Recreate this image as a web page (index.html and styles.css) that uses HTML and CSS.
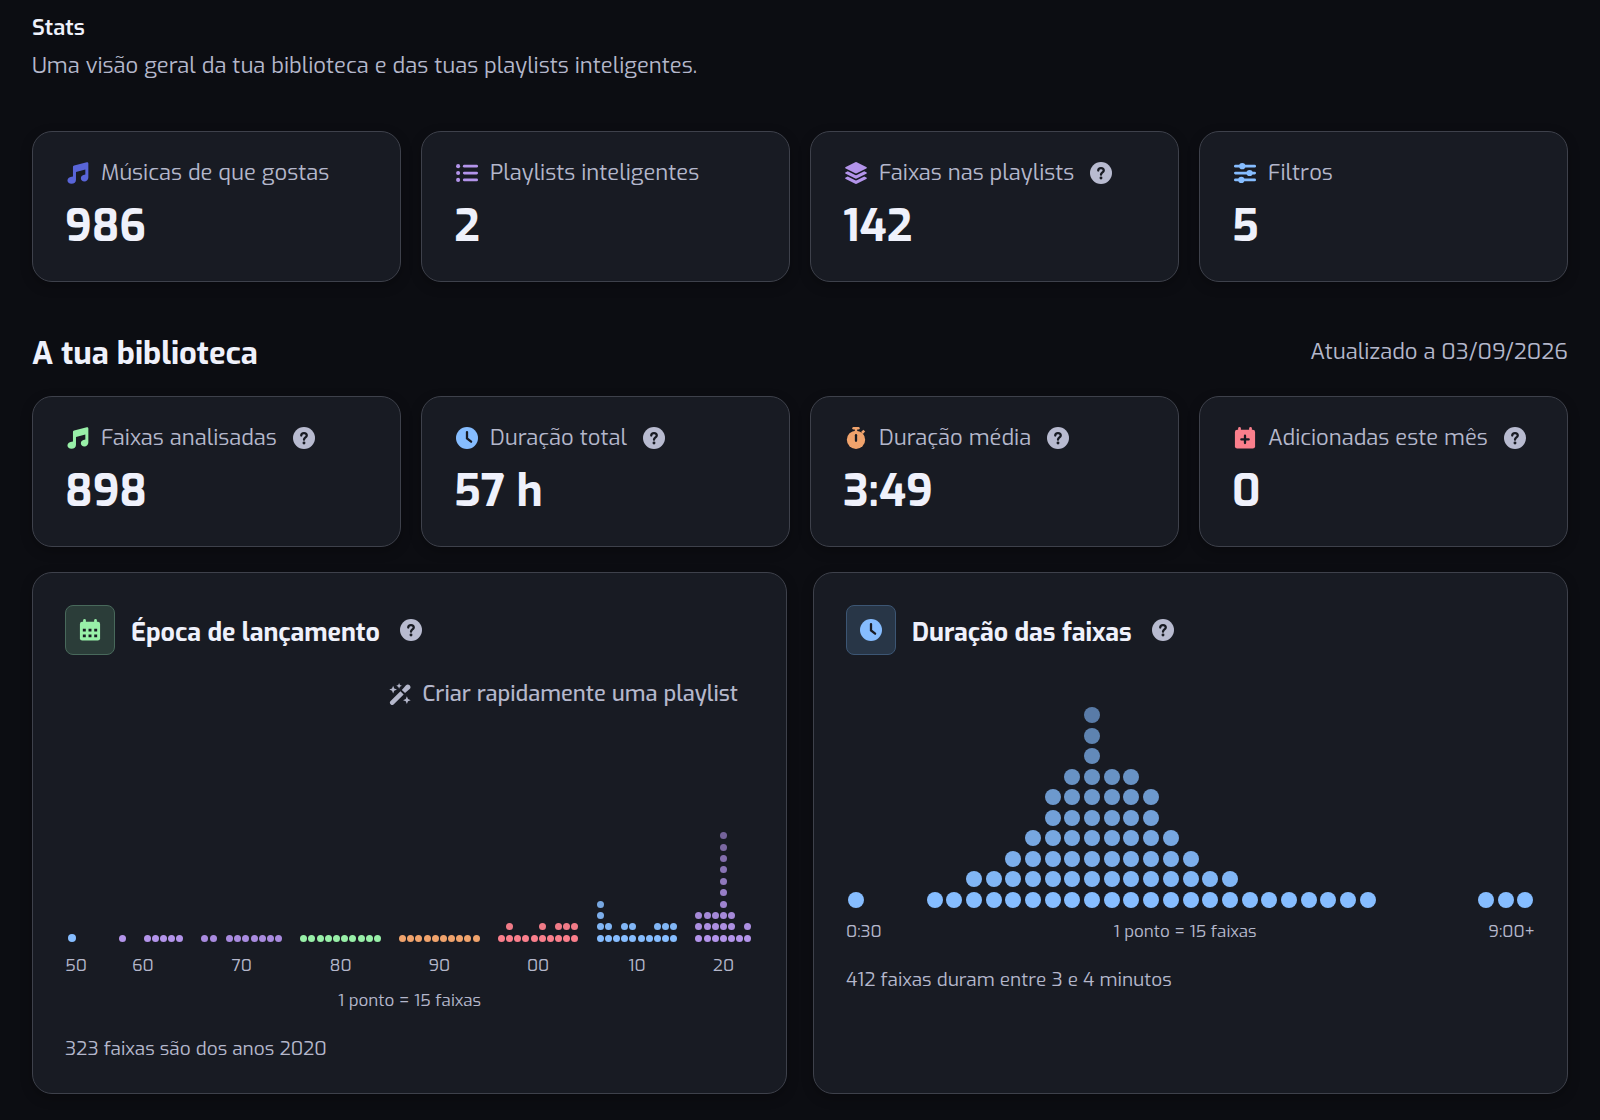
FILE: index.html
```html
<!DOCTYPE html>
<html lang="pt">
<head>
    <meta charset="UTF-8">
    <meta name="viewport" content="width=device-width, initial-scale=1.0">
    <title>Stats</title>
    <link rel="stylesheet" href="styles.css">
</head>
<body>

    <!-- Shared icons -->
    <svg class="sprite" aria-hidden="true">
        <symbol id="i-music" viewBox="0 0 24 24">
            <path d="M6.500 5.600c0-.9.500-1.500 1.300-1.700L21.600.2c.9-.2 1.700.3 1.700 1.300v15.400c0 2.600-1.900 4.300-4.300 4.300-2.300 0-3.900-1.500-3.900-3.500 0-2.300 1.800-3.700 4.900-4.100V8.200L9.800 10.900v8.400c0 2.600-2 4.500-4.900 4.500-2.600 0-4.400-1.500-4.400-3.600 0-2.400 2-3.800 6-4.300z"/>
        </symbol>
        <symbol id="i-list" viewBox="0 0 24 24">
            <circle cx="2.300" cy="4.500" r="2.200"/><circle cx="2.300" cy="12" r="2.200"/><circle cx="2.300" cy="19.500" r="2.200"/>
            <rect x="7.500" y="3" width="16.500" height="3" rx="1.500"/>
            <rect x="7.500" y="10.500" width="16.500" height="3" rx="1.500"/>
            <rect x="7.500" y="18" width="16.500" height="3" rx="1.500"/>
        </symbol>
        <symbol id="i-layers" viewBox="0 0 24 24">
            <path d="M11.200.3a2 2 0 0 1 1.600 0l10.400 5.200c.8.400.8 1.200 0 1.600l-10.400 5.200a2 2 0 0 1-1.600 0L.8 7.100c-.8-.4-.8-1.200 0-1.600z"/>
            <path d="M.8 11.200 3 10.100l8.200 4.100a2 2 0 0 0 1.600 0l8.200-4.100 2.200 1.100c.8.400.8 1.200 0 1.600L12.800 18a2 2 0 0 1-1.600 0L.8 12.800c-.8-.4-.8-1.200 0-1.600z"/>
            <path d="M.8 16.900 3 15.800l8.200 4.100a2 2 0 0 0 1.600 0l8.200-4.100 2.200 1.100c.8.400.8 1.200 0 1.600l-10.400 5.200a2 2 0 0 1-1.600 0L.8 18.500c-.8-.4-.8-1.200 0-1.600z"/>
        </symbol>
        <symbol id="i-sliders" viewBox="0 0 24 24">
            <rect x="0" y="3" width="24" height="3" rx="1.500"/><circle cx="9" cy="4.500" r="3.400"/>
            <rect x="0" y="10.500" width="24" height="3" rx="1.500"/><circle cx="17" cy="12" r="3.400"/>
            <rect x="0" y="18" width="24" height="3" rx="1.500"/><circle cx="8" cy="19.500" r="3.400"/>
        </symbol>
        <symbol id="i-clock" viewBox="0 0 24 24">
            <circle cx="12" cy="12" r="12"/>
            <path class="cut" d="M12 5.500v7l4.500 3.500"/>
        </symbol>
        <symbol id="i-timer" viewBox="0 0 24 24">
            <rect x="8" y="0" width="8" height="2.600" rx="1.300"/>
            <rect x="10.700" y="1" width="2.600" height="5"/>
            <path d="m17.500 5.500 2.500-2.500 2 2-2.500 2.500z"/>
            <circle cx="12" cy="14" r="10"/>
            <path class="cut" d="M12 9v6"/>
        </symbol>
        <symbol id="i-calendar-plus" viewBox="0 0 24 24">
            <rect x="1" y="3" width="22" height="20.500" rx="2.500"/>
            <rect x="4.500" y="0" width="3" height="5" rx="1.500"/><rect x="16.500" y="0" width="3" height="5" rx="1.500"/>
            <path class="cut" d="M12 9.500v8M8 13.500h8"/>
        </symbol>
        <symbol id="i-calendar" viewBox="0 0 24 24">
            <rect x="1" y="3" width="22" height="20.500" rx="2.500"/>
            <rect x="4.500" y="0" width="3" height="5" rx="1.500"/><rect x="16.500" y="0" width="3" height="5" rx="1.500"/>
            <path class="cut cut-grid" d="M4.200 12.200h3.200M10.400 12.200h3.200M16.600 12.200h3.200M4.200 18.500h3.200M10.400 18.500h3.200M16.600 18.500h3.200"/>
        </symbol>
        <symbol id="i-wand" viewBox="0 0 24 24">
            <path d="m1.500 20 11-11 3.500 3.500L5 23.500a2.500 2.500 0 0 1-3.500-3.500zM14 7.500l4.500-5a2.800 2.800 0 0 1 4 4l-5 4.500z"/>
            <path d="m4.500 3 1.200 3 3 1.200-3 1.200-1.200 3-1.200-3-3-1.200 3-1.200zM11 0l.9 2.200 2.200.9-2.200.9L11 6.200 10.100 4l-2.200-.9 2.200-.9zM19.500 14.500l1.200 3 3 1.200-3 1.200-1.200 3-1.200-3-3-1.200 3-1.200z"/>
        </symbol>
        <symbol id="i-help" viewBox="0 0 24 24">
            <circle cx="12" cy="12" r="12"/>
            <path class="cut" d="M9 9.300c0-3.600 6-3.600 6 0 0 2-3 2.200-3 4.500"/>
            <circle class="cut-dot" cx="12" cy="17.500" r="1.600"/>
        </symbol>
    </svg>

    <header class="page-header">
        <h1>Stats</h1>
        <p>Uma visão geral da tua biblioteca e das tuas playlists inteligentes.</p>
    </header>

    <section class="card-grid">
        <div class="card">
            <div class="card-label"><svg class="icon indigo"><use href="#i-music"/></svg>Músicas de que gostas</div>
            <div class="card-value">986</div>
        </div>
        <div class="card">
            <div class="card-label"><svg class="icon purple"><use href="#i-list"/></svg>Playlists inteligentes</div>
            <div class="card-value">2</div>
        </div>
        <div class="card">
            <div class="card-label"><svg class="icon purple"><use href="#i-layers"/></svg>Faixas nas playlists
                <button class="help" aria-label="Ajuda"><svg class="icon"><use href="#i-help"/></svg></button></div>
            <div class="card-value">142</div>
        </div>
        <div class="card">
            <div class="card-label"><svg class="icon blue"><use href="#i-sliders"/></svg>Filtros</div>
            <div class="card-value">5</div>
        </div>
    </section>

    <div class="section-header">
        <h2>A tua biblioteca</h2>
        <span>Atualizado a 03/09/2026</span>
    </div>

    <section class="card-grid">
        <div class="card">
            <div class="card-label"><svg class="icon green"><use href="#i-music"/></svg>Faixas analisadas
                <button class="help" aria-label="Ajuda"><svg class="icon"><use href="#i-help"/></svg></button></div>
            <div class="card-value">898</div>
        </div>
        <div class="card">
            <div class="card-label"><svg class="icon blue"><use href="#i-clock"/></svg>Duração total
                <button class="help" aria-label="Ajuda"><svg class="icon"><use href="#i-help"/></svg></button></div>
            <div class="card-value">57 h</div>
        </div>
        <div class="card">
            <div class="card-label"><svg class="icon orange"><use href="#i-timer"/></svg>Duração média
                <button class="help" aria-label="Ajuda"><svg class="icon"><use href="#i-help"/></svg></button></div>
            <div class="card-value">3:49</div>
        </div>
        <div class="card">
            <div class="card-label"><svg class="icon red"><use href="#i-calendar-plus"/></svg>Adicionadas este mês
                <button class="help" aria-label="Ajuda"><svg class="icon"><use href="#i-help"/></svg></button></div>
            <div class="card-value">0</div>
        </div>
    </section>

    <section class="panel-grid">
        <div class="panel">
            <div class="panel-title">
                <span class="badge badge-green"><svg class="icon"><use href="#i-calendar"/></svg></span>
                <h3>Época de lançamento</h3>
                <button class="help" aria-label="Ajuda"><svg class="icon"><use href="#i-help"/></svg></button>
            </div>
            <div class="panel-actions">
                <button class="quick-button"><svg class="icon"><use href="#i-wand"/></svg>Criar rapidamente uma playlist</button>
            </div>
            <div class="year-chart" id="yearChart"></div>
            <p class="scale">1 ponto = 15 faixas</p>
            <p class="note">323 faixas são dos anos 2020</p>
        </div>

        <div class="panel">
            <div class="panel-title">
                <span class="badge badge-blue"><svg class="icon"><use href="#i-clock"/></svg></span>
                <h3>Duração das faixas</h3>
                <button class="help" aria-label="Ajuda"><svg class="icon"><use href="#i-help"/></svg></button>
            </div>
            <div class="dots duration-chart" id="durationChart"></div>
            <div class="axis">
                <span>0:30</span>
                <span>1 ponto = 15 faixas</span>
                <span>9:00+</span>
            </div>
            <p class="note">412 faixas duram entre 3 e 4 minutos</p>
        </div>
    </section>

    <script src="stats.js"></script>

</body>
</html>
```
FILE: styles.css
```css
:root {
    --bg: #0c0d12;
    --card: #181b23;
    --border: #3e414b;
    --text: #eff1fb;
    --muted: #b4b7cb;
    --help: #b8bbd0;
    --indigo: #5965d8;
    --purple: #b394ea;
    --violet: #a98bdf;
    --blue: #86bdff;
    --green: #98f0a8;
    --orange: #f0a36c;
    --red: #fa7f8c;
}

* {
    box-sizing: border-box;
}

body {
    font-family: Exo, 'Exo 2', Roboto, sans-serif;
    background: var(--bg);
    color: var(--text);
    margin: 0;
    padding: 12px 32px 24px;
}

h1, h2, h3, p {
    margin: 0;
}

.sprite {
    display: none;
}

.icon {
    width: 26px;
    height: 26px;
    padding: 2px;
    flex: none;
    fill: currentColor;
}

.cut {
    fill: none;
    stroke: var(--card);
    stroke-width: 2.5;
    stroke-linecap: round;
}

.cut-grid {
    stroke-width: 3;
    stroke-linecap: butt;
}

.cut-dot {
    fill: var(--card);
}

.indigo { color: var(--indigo); }
.purple { color: var(--purple); }
.violet { color: var(--violet); }
.blue { color: var(--blue); }
.green { color: var(--green); }
.orange { color: var(--orange); }
.red { color: var(--red); }

/* Header */
.page-header {
    margin-bottom: 49px;
}

.page-header h1 {
    font-size: 22px;
    font-weight: 600;
    line-height: 32px;
}

.page-header p {
    margin-top: 6px;
    font-size: 22px;
    line-height: 32px;
    color: var(--muted);
}

/* Cards */
.card-grid {
    display: grid;
    grid-template-columns: repeat(4, minmax(0, 1fr));
    gap: 20px;
}

.card, .panel {
    background: var(--card);
    border: 1px solid var(--border);
    border-radius: 20px;
    box-shadow: 0 4px 12px rgba(0, 0, 0, 0.25);
}

.card {
    padding: 25px 32px 27px;
}

.card-label {
    display: flex;
    align-items: center;
    gap: 10px;
    font-size: 22px;
    line-height: 32px;
    color: var(--muted);
    white-space: nowrap;
}

.card-value {
    margin-top: 9px;
    font-size: 44px;
    font-weight: 700;
    line-height: 56px;
}

.help {
    display: flex;
    margin: 0 0 0 4px;
    padding: 0;
    border: none;
    background: none;
    color: var(--help);
    cursor: pointer;
}

.section-header {
    display: flex;
    justify-content: space-between;
    align-items: flex-start;
    margin: 50px 0 21px;
}

.section-header h2 {
    font-size: 31px;
    font-weight: 700;
    line-height: 43px;
}

.section-header span {
    font-size: 22px;
    line-height: 40px;
    color: var(--muted);
}

/* Panels */
.panel-grid {
    display: grid;
    grid-template-columns: repeat(2, minmax(0, 1fr));
    gap: 26px;
    margin-top: 25px;
}

.panel {
    padding: 32px 32px 30px;
}

.panel-title {
    display: flex;
    align-items: center;
    gap: 16px;
}

.panel-title h3 {
    padding-top: 4px;
    font-size: 25px;
    font-weight: 700;
}

.panel-title .help {
    margin-left: 2px;
}

.badge {
    display: flex;
    align-items: center;
    justify-content: center;
    width: 50px;
    height: 50px;
    border: 1px solid;
    border-radius: 8px;
}

.badge-green {
    color: var(--green);
    background: #2b3d39;
    border-color: #48695b;
}

.badge-green .cut {
    stroke: #2b3d39;
}

.badge-blue {
    color: var(--blue);
    background: #283647;
    border-color: #3c5674;
}

.panel-actions {
    display: flex;
    justify-content: flex-end;
    margin-top: 23px;
}

.quick-button {
    display: flex;
    align-items: center;
    gap: 10px;
    padding: 0 16px;
    border: none;
    background: none;
    color: var(--muted);
    font-family: inherit;
    font-size: 22px;
    font-weight: 500;
    line-height: 32px;
    cursor: pointer;
}

/* Dot charts */
.dots {
    display: flex;
}

.column {
    flex: 1;
    display: flex;
    flex-direction: column-reverse;
}

.cell {
    height: 10%;
    display: flex;
    align-items: center;
    justify-content: center;
}

.dot {
    width: 7px;
    height: 7px;
    border-radius: 50%;
    background: currentColor;
}

.year-chart {
    display: flex;
    gap: 17px;
    margin-top: 120px;
    padding-right: 2px;
}

.decade {
    min-width: 0;
}

.decade .dots {
    height: 114px;
}

/* the lone year sits under the start of its label */
.decade:first-child .dots {
    width: 14px;
}

.decade:first-child .dot {
    width: 8px;
    height: 8px;
}

.decade-label {
    margin-top: 10px;
    font-size: 17px;
    line-height: 24px;
    text-align: center;
    color: var(--muted);
}

.duration-chart {
    height: 205px;
    margin-top: 50px;
    color: var(--blue);
}

.duration-chart .dot {
    width: 16px;
    height: 16px;
}

.axis {
    display: flex;
    justify-content: space-between;
    margin-top: 10px;
}

.axis, .scale {
    font-size: 17px;
    line-height: 24px;
    color: var(--muted);
}

.scale {
    margin-top: 11px;
    text-align: center;
}

.note {
    margin-top: 22px;
    font-size: 19px;
    line-height: 28px;
    color: var(--muted);
}
```
FILE: stats.js
```js
const ROWS = 10;

// One entry per decade, one number per year (1 dot = 15 tracks)
const decades = [
    { label: "50", color: "blue", years: [1] },
    { label: "60", color: "purple", years: [0, 0, 1, 0, 0, 1, 1, 1, 1, 1] },
    { label: "70", color: "violet", years: [1, 1, 0, 1, 1, 1, 1, 1, 1, 1] },
    { label: "80", color: "green", years: [1, 1, 1, 1, 1, 1, 1, 1, 1, 1] },
    { label: "90", color: "orange", years: [1, 1, 1, 1, 1, 1, 1, 1, 1, 1] },
    { label: "00", color: "red", years: [1, 2, 1, 1, 1, 2, 1, 2, 2, 2] },
    { label: "10", color: "blue", years: [4, 2, 1, 2, 2, 1, 1, 2, 2, 2] },
    { label: "20", color: "purple", years: [3, 3, 3, 10, 3, 1, 2] }
];

const durations = [
    1, 0, 0, 0, 1, 1, 2, 2, 3, 4, 6, 7, 10, 7, 7, 6, 4, 3,
    2, 2, 1, 1, 1, 1, 1, 1, 1, 0, 0, 0, 0, 0, 1, 1, 1
];

function drawColumns(container, values) {
    values.forEach(count => {
        const column = document.createElement("div");
        column.className = "column";
        for (let row = 0; row < count; row++) {
            const cell = document.createElement("div");
            cell.className = "cell";
            const dot = document.createElement("span");
            dot.className = "dot";
            dot.style.opacity = 1 - 0.4 * row / (ROWS - 1);
            cell.appendChild(dot);
            column.appendChild(cell);
        }
        container.appendChild(column);
    });
}

const yearChart = document.getElementById("yearChart");
decades.forEach(decade => {
    const group = document.createElement("div");
    group.className = "decade";
    // a single year still needs room for its label
    group.style.flex = decade.years.length > 1 ? `${decade.years.length} 1 0` : "0 0 20px";

    const dots = document.createElement("div");
    dots.className = `dots ${decade.color}`;
    drawColumns(dots, decade.years);
    group.appendChild(dots);

    const label = document.createElement("div");
    label.className = "decade-label";
    label.textContent = decade.label;
    group.appendChild(label);
    yearChart.appendChild(group);
});

drawColumns(document.getElementById("durationChart"), durations);
```
